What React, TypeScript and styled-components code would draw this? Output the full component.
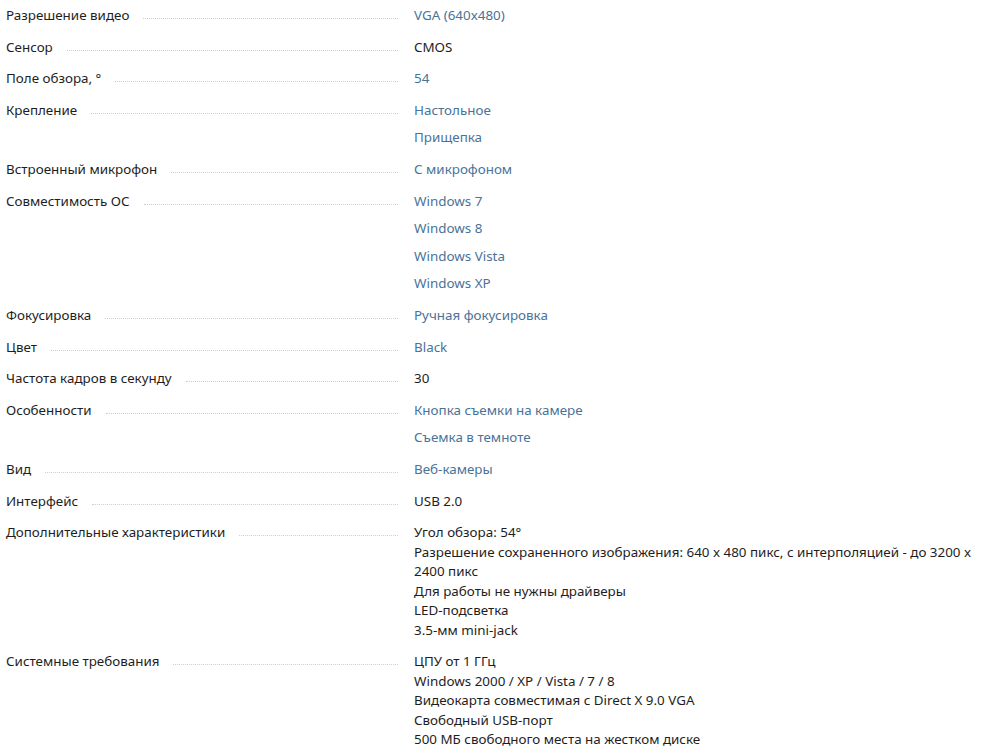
import styled, { createGlobalStyle } from 'styled-components';

const GlobalStyle = createGlobalStyle`
    body {
        margin: 0;
        background: #FFFFFF;
        font-family: 'Noto Sans', 'Open Sans', sans-serif;
        font-size: 13.4px;
        color: #1E1E1E;
    }
`

const Specs = styled.div`
    display: grid;
    row-gap: 4px;
    padding: 2px 6px 0 6px;
`

const Row = styled.div`
    display: grid;
    grid-template-columns: 392px 1fr;
    column-gap: 16px;
    align-items: start;
`

const Name = styled.div`
    display: flex;
    align-items: baseline;
    height: 27.6px;
    line-height: 27.6px;
    white-space: nowrap;
`

const Dots = styled.span`
    flex: 1;
    margin-left: 14px;
    border-bottom: 1px dotted #CFCFCF;
    transform: translateY(-1px);
`

const Values = styled.div`
    display: grid;
`

const ValueLink = styled.a`
    line-height: 27.6px;
    color: #4A7398;
    text-decoration: none;
    cursor: pointer;
`

const ValueText = styled.span`
    line-height: 27.6px;
    color: #1E1E1E;
`

const TextBlock = styled.div`
    padding: 4px 0;
    line-height: 19.5px;
    color: #1E1E1E;
`

type Spec = {
    name: string
    links?: string[]
    text?: string
    lines?: string[]
}

const specs: Spec[] = [
    { name: 'Разрешение видео', links: ['VGA (640x480)'] },
    { name: 'Сенсор', text: 'CMOS' },
    { name: 'Поле обзора, °', links: ['54'] },
    { name: 'Крепление', links: ['Настольное', 'Прищепка'] },
    { name: 'Встроенный микрофон', links: ['С микрофоном'] },
    { name: 'Совместимость ОС', links: ['Windows 7', 'Windows 8', 'Windows Vista', 'Windows XP'] },
    { name: 'Фокусировка', links: ['Ручная фокусировка'] },
    { name: 'Цвет', links: ['Black'] },
    { name: 'Частота кадров в секунду', text: '30' },
    { name: 'Особенности', links: ['Кнопка съемки на камере', 'Съемка в темноте'] },
    { name: 'Вид', links: ['Веб-камеры'] },
    { name: 'Интерфейс', text: 'USB 2.0' },
    {
        name: 'Дополнительные характеристики',
        lines: [
            'Угол обзора: 54°',
            'Разрешение сохраненного изображения: 640 x 480 пикс, с интерполяцией - до 3200 x 2400 пикс',
            'Для работы не нужны драйверы',
            'LED-подсветка',
            '3.5-мм mini-jack',
        ],
    },
    {
        name: 'Системные требования',
        lines: [
            'ЦПУ от 1 ГГц',
            'Windows 2000 / XP / Vista / 7 / 8',
            'Видеокарта совместимая с Direct X 9.0 VGA',
            'Свободный USB-порт',
            '500 МБ свободного места на жестком диске',
        ],
    },
]

export default function App() {
    return (
        <>
            <GlobalStyle />
            <Specs>
                {specs.map((spec) => (
                    <Row key={spec.name}>
                        <Name>
                            {spec.name}
                            <Dots />
                        </Name>
                        {spec.lines ? (
                            <TextBlock>
                                {spec.lines.map((line) => (
                                    <div key={line}>{line}</div>
                                ))}
                            </TextBlock>
                        ) : (
                            <Values>
                                {spec.links?.map((link) => (
                                    <ValueLink key={link}>{link}</ValueLink>
                                ))}
                                {spec.text && <ValueText>{spec.text}</ValueText>}
                            </Values>
                        )}
                    </Row>
                ))}
            </Specs>
        </>
    )
}
